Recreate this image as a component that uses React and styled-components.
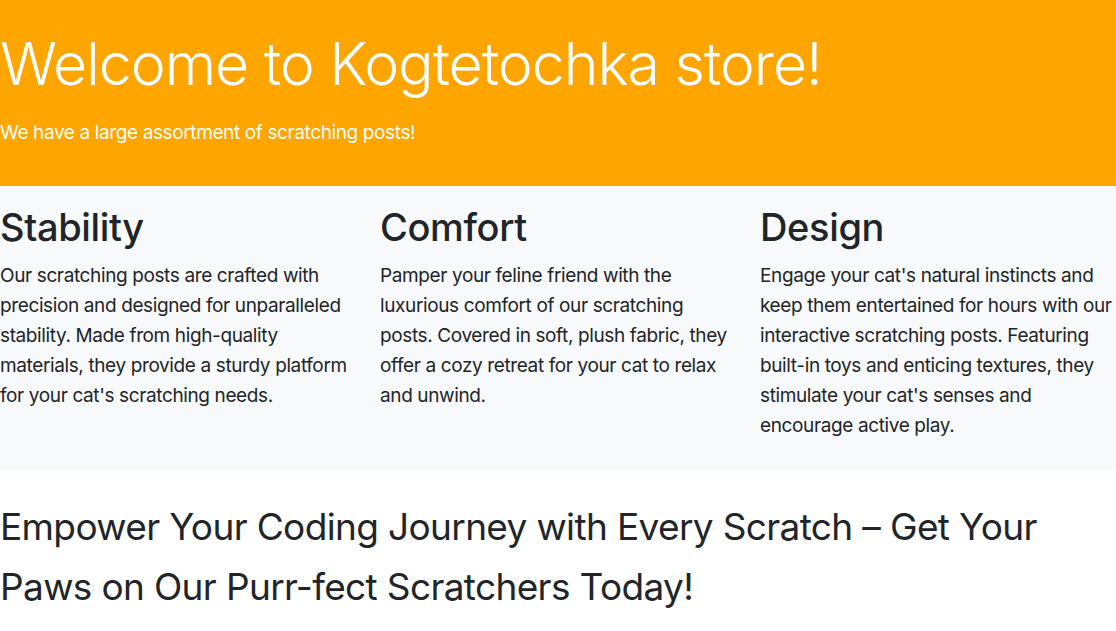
import React from "react";
import styled, { createGlobalStyle } from "styled-components";

const GlobalStyle = createGlobalStyle`
  * { box-sizing: border-box; }
  body {
    margin: 0;
    font-family: Inter, "Noto Sans", sans-serif;
    color: #212529;
    background: #fff;
    overflow-x: hidden;
  }
`;

const features = [
  {
    title: "Stability",
    text: "Our scratching posts are crafted with precision and designed for unparalleled stability. Made from high-quality materials, they provide a sturdy platform for your cat's scratching needs.",
  },
  {
    title: "Comfort",
    text: "Pamper your feline friend with the luxurious comfort of our scratching posts. Covered in soft, plush fabric, they offer a cozy retreat for your cat to relax and unwind.",
  },
  {
    title: "Design",
    text: "Engage your cat's natural instincts and keep them entertained for hours with our interactive scratching posts. Featuring built-in toys and enticing textures, they stimulate your cat's senses and encourage active play.",
  },
];

function App() {
  return (
    <>
      <GlobalStyle />
      <Hero>
        <HeroTitle>Welcome to Kogtetochka store!</HeroTitle>
        <HeroLead>We have a large assortment of scratching posts!</HeroLead>
      </Hero>
      <Features>
        {features.map((f) => (
          <Feature key={f.title}>
            <FeatureTitle>{f.title}</FeatureTitle>
            <FeatureText>{f.text}</FeatureText>
          </Feature>
        ))}
      </Features>
      <Slogan>
        Empower Your Coding Journey with Every Scratch – Get Your Paws on Our
        Purr-fect Scratchers Today!
      </Slogan>
    </>
  );
}

const Hero = styled.header`
  background-color: #ffa500;
  color: #fff;
  padding: 29px 0 22px;
`;

const HeroTitle = styled.h1`
  margin: 0 0 18px;
  font-size: 59px;
  font-weight: 300;
  line-height: 1.2;
  letter-spacing: -1.05px;
`;

const HeroLead = styled.p`
  margin: 0 0 16px;
  font-size: 19px;
  line-height: 30px;
  letter-spacing: -0.38px;
`;

const Features = styled.section`
  display: grid;
  grid-template-columns: repeat(3, 380px);
  background-color: #f8f9fa;
  padding: 19px 0 13px;
`;

const Feature = styled.div`
  padding-right: 24px;
`;

const FeatureTitle = styled.h2`
  margin: 0 0 11px;
  font-size: 38px;
  font-weight: 500;
  line-height: 1.2;
  letter-spacing: -0.35px;
`;

const FeatureText = styled.p`
  margin: 0 0 16px;
  font-size: 19px;
  line-height: 30px;
  letter-spacing: -0.38px;
`;

const Slogan = styled.p`
  margin: 0;
  padding-top: 27px;
  max-width: 1080px;
  font-size: 37px;
  line-height: 60px;
  letter-spacing: -0.64px;
`;

export default App;
